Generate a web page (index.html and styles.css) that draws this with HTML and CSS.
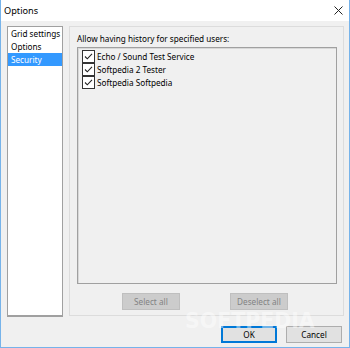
FILE: index.html
```html
<!DOCTYPE html>
<html lang="en">
<head>
  <meta charset="UTF-8" />
  <title>Options</title>
  <link rel="stylesheet" href="styles.css">
</head>
<body>
  <div class="window">
    <div class="titlebar">
      <span class="title">Options</span>
      <svg class="close" width="9" height="9" viewBox="0 0 9 9">
        <path d="M0.5 0.5 L8.5 8.5 M8.5 0.5 L0.5 8.5" stroke="#222" stroke-width="1" fill="none"/>
      </svg>
    </div>
    <div class="content">
      <div class="main">
        <ul class="nav">
          <li>Grid settings</li>
          <li>Options</li>
          <li class="selected">Security</li>
        </ul>
        <div class="panel">
          <div class="caption">Allow having history for specified users:</div>
          <div class="users">
            <label class="user"><span class="check"><svg width="11" height="11" viewBox="0 0 11 11"><path d="M2 5.5 L4.3 7.8 L9 2.8" stroke="#222" stroke-width="1.1" fill="none"/></svg></span>Echo / Sound Test Service</label>
            <label class="user"><span class="check"><svg width="11" height="11" viewBox="0 0 11 11"><path d="M2 5.5 L4.3 7.8 L9 2.8" stroke="#222" stroke-width="1.1" fill="none"/></svg></span>Softpedia 2 Tester</label>
            <label class="user"><span class="check"><svg width="11" height="11" viewBox="0 0 11 11"><path d="M2 5.5 L4.3 7.8 L9 2.8" stroke="#222" stroke-width="1.1" fill="none"/></svg></span>Softpedia Softpedia</label>
          </div>
          <div class="panel-buttons">
            <button class="btn" disabled>Select all</button>
            <button class="btn" disabled>Deselect all</button>
          </div>
        </div>
      </div>
      <div class="footer">
        <button class="btn default">OK</button>
        <button class="btn">Cancel</button>
      </div>
      <div class="watermark">SOFTPEDIA</div>
    </div>
  </div>
</body>
</html>
```

FILE: styles.css
```css
body {
  margin: 0;
  font-family: 'Noto Sans', 'Open Sans', sans-serif;
  font-size: 8.2px;
  color: #000;
  background: #f0f0f0;
}
.window {
  width: 350px;
  height: 348px;
  box-sizing: border-box;
  border: 1px solid #76b3ea;
  border-top: none;
  display: flex;
  flex-direction: column;
  background: #f0f0f0;
}
.titlebar {
  height: 21px;
  background: #fff;
  display: flex;
  align-items: center;
  justify-content: space-between;
  padding: 0 6px 0 3px;
  flex-shrink: 0;
}
.title {
  font-size: 9.2px;
}
.content {
  position: relative;
  flex: 1;
  padding: 5px 5px 0 6px;
}
.main {
  display: flex;
  gap: 6px;
}
.nav {
  list-style: none;
  margin: 0;
  padding: 0;
  width: 56px;
  height: 288px;
  background: #fff;
  border: 1px solid #a0a0a0;
  border-bottom: 2px solid #a0a0a0;
}
.nav li {
  height: 13px;
  line-height: 13px;
  padding-left: 3px;
  white-space: nowrap;
}
.nav .selected {
  background: #3399ff;
  color: #fff;
}
.panel {
  width: 270px;
  height: 288px;
  border: 1px solid #dcdcdc;
  padding: 0 6px 0 7px;
}
.caption {
  height: 20px;
  line-height: 24px;
}
.users {
  box-sizing: border-box;
  height: 237px;
  border: 1px solid #a0a0a0;
  box-shadow: inset 1px 1px 0 #d8d8d8;
  padding: 2px 4px;
}
.user {
  display: flex;
  align-items: center;
  height: 13px;
  gap: 2px;
  white-space: nowrap;
}
.check {
  width: 11px;
  height: 11px;
  border: 1px solid #333;
  background: #fff;
  display: flex;
}
.panel-buttons {
  display: flex;
  gap: 50px;
  margin: 9px 0 0 45px;
}
.btn {
  font-family: inherit;
  font-size: 8.2px;
  width: 58px;
  height: 17px;
  padding: 0;
  background: #e1e1e1;
  border: 1px solid #adadad;
  color: #000;
}
.btn:disabled {
  background: #cccccc;
  border-color: #bfbfbf;
  color: #838383;
}
.footer {
  display: flex;
  justify-content: flex-end;
  gap: 9px;
  margin-top: 9px;
  padding-right: 2px;
}
.footer .btn {
  width: 56px;
}
.btn.default {
  border-color: #0078d7;
  box-shadow: inset 0 0 0 1px #0078d7;
}
.watermark {
  position: absolute;
  left: 184px;
  top: 288px;
  font-family: 'DejaVu Sans', sans-serif;
  font-size: 20.5px;
  font-weight: bold;
  color: rgba(255, 255, 255, 0.45);
  pointer-events: none;
}
```
